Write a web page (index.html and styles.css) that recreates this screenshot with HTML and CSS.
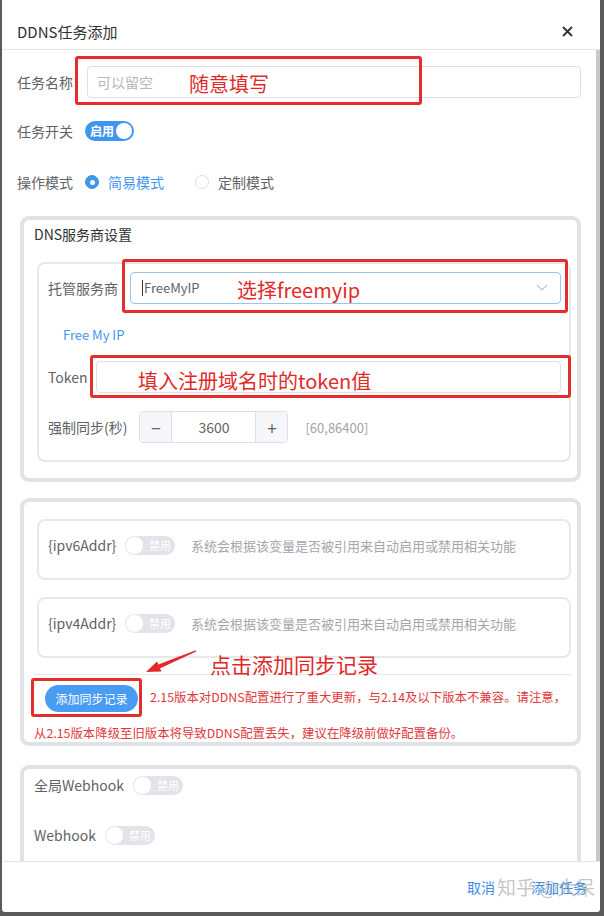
FILE: index.html
```html
<!DOCTYPE html>
<html>
<head>
    <title>DDNS任务添加</title>
    <meta charset="UTF-8">
    <link rel="stylesheet" href="styles.css">
</head>
<body>
    <div class="dialog">
        <div class="dialog-header">
            <span class="dialog-title">DDNS任务添加</span>
            <svg class="close" width="11" height="11" viewBox="0 0 11 11"><path d="M1 1L10 10M10 1L1 10" stroke="#303133" stroke-width="1.8"/></svg>
        </div>
        <div class="dialog-main">
            <div class="dialog-body">
                <div class="form-row row-name">
                    <span class="label">任务名称</span>
                    <div class="input"><span class="placeholder">可以留空</span></div>
                </div>
                <div class="form-row row-switch">
                    <span class="label">任务开关</span>
                    <span class="switch on"><span class="switch-text">启用</span><span class="knob"></span></span>
                </div>
                <div class="form-row row-mode">
                    <span class="label">操作模式</span>
                    <span class="radio checked"></span><span class="radio-text active">简易模式</span>
                    <span class="radio"></span><span class="radio-text">定制模式</span>
                </div>

                <div class="card card-dns">
                    <div class="card-title">DNS服务商设置</div>
                    <div class="inner-card dns-inner">
                        <div class="form-row row-input">
                            <span class="label">托管服务商</span>
                            <div class="input select">
                                <span class="caret"></span><span class="value">FreeMyIP</span>
                                <svg class="chevron" width="12" height="7" viewBox="0 0 12 7"><path d="M1 1L6 6L11 1" fill="none" stroke="#c0c4cc" stroke-width="1.2"/></svg>
                            </div>
                        </div>
                        <div class="provider-link">Free My IP</div>
                        <div class="form-row row-input row-token">
                            <span class="label label-token">Token</span>
                            <div class="input"></div>
                        </div>
                        <div class="form-row row-input row-sync">
                            <span class="label">强制同步(秒)</span>
                            <div class="number-input">
                                <span class="num-btn minus">−</span>
                                <span class="num-value">3600</span>
                                <span class="num-btn plus">+</span>
                            </div>
                            <span class="hint">[60,86400]</span>
                        </div>
                    </div>
                </div>

                <div class="card card-vars">
                    <div class="inner-card var-card">
                        <div class="form-row var-row">
                            <span class="label label-var">{ipv6Addr}</span>
                            <span class="switch off"><span class="knob"></span><span class="switch-text">禁用</span></span>
                            <span class="var-desc">系统会根据该变量是否被引用来自动启用或禁用相关功能</span>
                        </div>
                    </div>
                    <div class="inner-card var-card">
                        <div class="form-row var-row">
                            <span class="label label-var">{ipv4Addr}</span>
                            <span class="switch off"><span class="knob"></span><span class="switch-text">禁用</span></span>
                            <span class="var-desc">系统会根据该变量是否被引用来自动启用或禁用相关功能</span>
                        </div>
                    </div>
                    <div class="divider"></div>
                    <p class="sync-tip"><span class="btn-add">添加同步记录</span>2.15版本对DDNS配置进行了重大更新，与2.14及以下版本不兼容。请注意，<br>从2.15版本降级至旧版本将导致DDNS配置丢失，建议在降级前做好配置备份。</p>
                </div>

                <div class="card card-hooks">
                    <div class="form-row hook-row">
                        <span class="label label-global">全局Webhook</span>
                        <span class="switch off"><span class="knob"></span><span class="switch-text">禁用</span></span>
                    </div>
                    <div class="form-row hook-row">
                        <span class="label label-hook">Webhook</span>
                        <span class="switch off"><span class="knob"></span><span class="switch-text">禁用</span></span>
                    </div>
                </div>
            </div>
            <div class="scrollbar"></div>
        </div>
        <div class="dialog-footer">
            <span class="footer-btn">取消</span>
            <span class="footer-btn">添加任务</span>
        </div>
    </div>

    <div class="annotations">
        <div class="mark mark-name"></div>
        <span class="note note-name">随意填写</span>
        <div class="mark mark-provider"></div>
        <span class="note note-provider">选择freemyip</span>
        <div class="mark mark-token"></div>
        <span class="note note-token">填入注册域名时的token值</span>
        <div class="mark mark-button"></div>
        <span class="note note-button">点击添加同步记录</span>
        <svg class="arrow" width="604" height="916" viewBox="0 0 604 916">
            <polygon points="196.2,651.5 195.8,650.2 158.3,664.6 159.7,668.4" fill="#e3282b"/>
            <polygon points="146,672 157,661.5 161.5,671.5" fill="#e3282b"/>
        </svg>
        <span class="watermark">知乎 @大呆</span>
    </div>
</body>
</html>
```

FILE: styles.css
```css
* {
    box-sizing: border-box;
}
body {
    margin: 0;
    width: 604px;
    height: 916px;
    overflow: hidden;
    position: relative;
    background-color: #5a5a5a;
    font-family: "Noto Sans CJK SC", "Noto Sans", sans-serif;
    color: #606266;
}
.dialog {
    margin-left: 2px;
    width: 598px;
    height: 912px;
    background-color: #fff;
    border-radius: 0 0 3px 3px;
    display: flex;
    flex-direction: column;
}
.dialog-header {
    flex: none;
    height: 50px;
    padding: 14px 27px 0 15px;
    border-bottom: 1px solid #e6e6e6;
    display: flex;
    align-items: center;
    justify-content: space-between;
}
.dialog-title {
    font-size: 15px;
    line-height: 20px;
    color: #303133;
}
.dialog-main {
    flex: 1;
    min-height: 0;
    display: flex;
}
.dialog-body {
    flex: 1;
    overflow: hidden;
    padding: 16px 15px 0;
}
.scrollbar {
    width: 4px;
    background-color: #c9c9c9;
}
.dialog-footer {
    flex: none;
    height: 51px;
    border-top: 1px solid #e4e4e4;
    display: flex;
    align-items: center;
    justify-content: flex-end;
    gap: 36px;
    padding-right: 13px;
}
.footer-btn {
    font-size: 14px;
    line-height: 20px;
    color: #3a8ee6;
}

/* form rows */
.form-row {
    display: flex;
    align-items: center;
}
.label {
    font-size: 14px;
    line-height: 20px;
    color: #606266;
    white-space: nowrap;
}
.label-token { width: 37px; }
.label-var { width: 65px; }
.label-global { width: 87px; }
.label-hook { width: 59px; }
.input {
    flex: 1;
    height: 32px;
    border: 1px solid #dcdfe6;
    border-radius: 4px;
    padding-left: 9px;
    display: flex;
    align-items: center;
}
.placeholder {
    font-size: 14px;
    color: #b4b8bf;
}
.row-name {
    height: 32px;
    gap: 14px;
}
.row-switch {
    margin-top: 23px;
    height: 20px;
    gap: 12px;
}
.row-mode {
    margin-top: 31px;
    height: 20px;
}
.row-mode .label {
    margin-right: 12px;
}
.radio {
    width: 14px;
    height: 14px;
    border-radius: 50%;
    border: 1px solid #dcdfe6;
    background-color: #fff;
    display: flex;
    align-items: center;
    justify-content: center;
}
.radio.checked {
    border-color: #4096ef;
    background-color: #4096ef;
}
.radio.checked::after {
    content: "";
    width: 5px;
    height: 5px;
    border-radius: 50%;
    background-color: #fff;
}
.radio-text {
    margin-left: 9px;
    margin-right: 31px;
    font-size: 14px;
    line-height: 20px;
}
.radio-text.active {
    color: #4096ef;
}

/* switches */
.switch {
    width: 50px;
    height: 19px;
    border-radius: 10px;
    display: inline-flex;
    align-items: center;
    flex: none;
}
.switch.on {
    width: 49px;
    height: 20px;
    background-color: #4096ef;
    justify-content: space-between;
    padding: 0 2px 0 5px;
}
.switch.on .switch-text {
    font-size: 12px;
    font-weight: bold;
}
.switch.off {
    background-color: #e2e4e9;
    padding-left: 1px;
}
.switch-text {
    font-size: 11px;
    line-height: 16px;
    color: #fff;
}
.switch.off .switch-text {
    margin-left: 6px;
}
.knob {
    width: 16px;
    height: 16px;
    border-radius: 50%;
    background-color: #fff;
}
.switch.off .knob {
    width: 17px;
    height: 17px;
    box-shadow: 0 0 0 1px #e8e9ec;
}

/* cards */
.card {
    margin-left: 3px;
    border: 4px solid #dfe2e7;
    border-radius: 9px;
    padding: 4px 6px 16px 10px;
}
.card-dns {
    margin-top: 24px;
}
.card-title {
    font-size: 14px;
    line-height: 20px;
    color: #303133;
}
.inner-card {
    margin-left: 3px;
    border: 2px solid #e6e8ec;
    border-radius: 8px;
}
.dns-inner {
    margin-top: 18px;
    padding: 8px 8px 17px 9px;
}
.row-input {
    height: 31px;
    gap: 12px;
}
.select {
    border-color: #9cc3ea;
    padding-left: 11px;
    padding-right: 12px;
}
.caret {
    width: 1px;
    height: 16px;
    background-color: #333;
    margin-right: 1px;
}
.value {
    flex: 1;
    font-size: 13px;
    color: #606266;
}
.provider-link {
    margin: 23px 0 0 15px;
    font-size: 13px;
    line-height: 18px;
    color: #4096ef;
}
.row-token {
    margin-top: 17px;
    height: 32px;
    gap: 11px;
}
.row-sync {
    margin-top: 18px;
    height: 32px;
}
.number-input {
    width: 149px;
    height: 32px;
    border: 1px solid #dcdfe6;
    border-radius: 4px;
    display: flex;
    overflow: hidden;
}
.num-btn {
    width: 32px;
    background-color: #f5f7fa;
    font-size: 17px;
    color: #606266;
    display: flex;
    align-items: center;
    justify-content: center;
}
.minus {
    border-right: 1px solid #dcdfe6;
}
.plus {
    border-left: 1px solid #dcdfe6;
}
.num-value {
    flex: 1;
    font-size: 14px;
    color: #606266;
    display: flex;
    align-items: center;
    justify-content: center;
}
.hint {
    margin-left: 5px;
    font-size: 13px;
    color: #a0a3a8;
}

/* variables card */
.card-vars {
    margin-top: 16px;
    padding-top: 17px;
    padding-bottom: 0;
}
.var-card {
    padding: 14px 8px 23px 9px;
}
.var-card + .var-card {
    margin-top: 17px;
}
.var-row {
    height: 20px;
    gap: 12px;
}
.var-desc {
    margin-left: 4px;
    font-size: 13px;
    color: #a3a6ad;
    white-space: nowrap;
}
.divider {
    margin-top: 16px;
    height: 1px;
    background-color: #e4e7ed;
}
.sync-tip {
    margin: 4px 0 0;
    height: 63px;
    font-size: 12.4px;
    line-height: 36px;
    color: #e0383b;
    white-space: nowrap;
}
.btn-add {
    display: inline-block;
    vertical-align: middle;
    width: 93px;
    height: 27px;
    margin: 0 12px 0 11px;
    border-radius: 14px;
    background-color: #4a9cf3;
    color: #fff;
    font-size: 12px;
    line-height: 27px;
    text-align: center;
}

/* webhook card */
.card-hooks {
    margin-top: 19px;
    padding-top: 6px;
    padding-bottom: 40px;
}
.hook-row {
    height: 20px;
    gap: 12px;
}
.hook-row + .hook-row {
    margin-top: 30px;
}

/* red annotations drawn over the screenshot */
.annotations {
    position: absolute;
    top: 0;
    left: 0;
    width: 604px;
    height: 916px;
    pointer-events: none;
}
.mark {
    position: absolute;
    border: 3px solid #e52d2d;
    border-radius: 3px;
}
.mark-name { left: 75px; top: 56px; width: 347px; height: 49px; }
.mark-provider { left: 122px; top: 259px; width: 446px; height: 54px; }
.mark-token { left: 90px; top: 355px; width: 481px; height: 43px; }
.mark-button { left: 31px; top: 678px; width: 111px; height: 39px; }
.note {
    position: absolute;
    font-size: 20px;
    line-height: 28px;
    color: #e02a2a;
    white-space: nowrap;
}
.note-name { left: 189px; top: 70px; }
.note-provider { left: 237px; top: 276px; }
.note-token { left: 138px; top: 367px; }
.note-button { left: 210px; top: 650px; font-size: 21px; }
.arrow {
    position: absolute;
    top: 0;
    left: 0;
}
.watermark {
    position: absolute;
    left: 497px;
    top: 873px;
    font-size: 19px;
    line-height: 28px;
    color: rgba(150, 150, 150, 0.55);
    white-space: nowrap;
}
```
